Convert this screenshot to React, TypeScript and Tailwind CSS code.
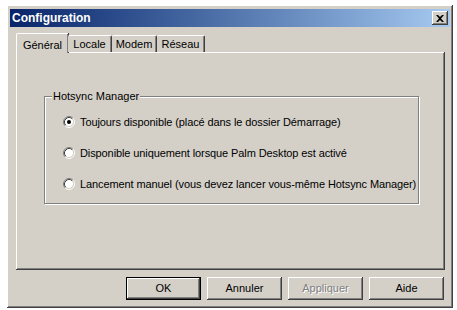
const raised =
  'shadow-[inset_-1px_-1px_#404040,inset_1px_1px_#ffffff,inset_-2px_-2px_#808080,inset_2px_2px_#d4d0c8]';

const Radio = ({ checked }: { checked?: boolean }) => (
  <svg width="12" height="12" viewBox="0 0 12 12" className="shrink-0">
    <circle cx="6" cy="6" r="4.5" fill="#ffffff" />
    <path d="M2.11 9.89 A5.5 5.5 0 0 1 9.89 2.11" fill="none" stroke="#808080" />
    <path d="M9.89 2.11 A5.5 5.5 0 0 1 2.11 9.89" fill="none" stroke="#ffffff" />
    <path d="M2.82 9.18 A4.5 4.5 0 0 1 9.18 2.82" fill="none" stroke="#404040" />
    <path d="M9.18 2.82 A4.5 4.5 0 0 1 2.82 9.18" fill="none" stroke="#d4d0c8" />
    {checked && <circle cx="6" cy="6" r="2" fill="#000000" />}
  </svg>
);

const options = [
  { label: 'Toujours disponible (placé dans le dossier Démarrage)', checked: true },
  { label: 'Disponible uniquement lorsque Palm Desktop est activé' },
  { label: 'Lancement manuel (vous devez lancer vous-même Hotsync Manager)' },
];

const tabs = [
  { label: 'Général', w: 'w-[52px]' },
  { label: 'Locale', w: 'w-[44px]' },
  { label: 'Modem', w: 'w-[45px]' },
  { label: 'Réseau', w: 'w-[48px]' },
];

const Button = ({ label, isDefault, disabled }: { label: string; isDefault?: boolean; disabled?: boolean }) => (
  <div
    className={`w-[75px] h-[23px] flex items-center justify-center bg-[#d4d0c8] ${
      isDefault ? 'border border-black' : ''
    } ${raised}`}
  >
    <span className={disabled ? 'text-[#808080] [text-shadow:1px_1px_0_#ffffff]' : 'text-black'}>{label}</span>
  </div>
);

export default function App() {
  return (
    <div
      className="w-[457px] h-[310px] bg-white pl-[7px] pt-[5px] text-[11px] leading-[13px] text-black"
      style={{ fontFamily: '"Liberation Sans", Arial, sans-serif' }}
    >
      {/* window */}
      <div className={`w-[446px] h-[303px] bg-[#d4d0c8] px-[3px] pt-[4px] flex flex-col ${raised}`}>
        {/* title bar */}
        <div className="h-[18px] flex items-center justify-between bg-gradient-to-r from-[#0a246a] to-[#a6caf0] pl-[2px] pr-[2px]">
          <span className="text-white font-bold text-[12px]">Configuration</span>
          <div className={`w-[16px] h-[14px] bg-[#d4d0c8] flex items-center justify-center ${raised}`}>
            <svg width="8" height="7" viewBox="0 0 8 7">
              <path d="M0 0 L2 0 L4 2 L6 0 L8 0 L5 3.5 L8 7 L6 7 L4 5 L2 7 L0 7 L3 3.5 Z" fill="#000000" />
            </svg>
          </div>
        </div>

        {/* tabs */}
        <div className="mt-[6px] pl-[6px] pr-[5px] flex flex-col">
          <div className="flex items-end h-[19px] relative z-10">
            {tabs.map((t, i) =>
              i === 0 ? (
                <div
                  key={t.label}
                  className={`${t.w} h-[20px] -mb-px bg-[#d4d0c8] border-l border-t border-white rounded-tl-[2px] shadow-[inset_-1px_0_#808080,1px_0_0_#404040] flex items-start justify-center pt-[5px]`}
                >
                  {t.label}
                </div>
              ) : (
                <div
                  key={t.label}
                  className={`${t.w} h-[17px] bg-[#d4d0c8] border-t border-white border-r border-r-[#404040] rounded-tl-[2px] rounded-tr-[2px] shadow-[inset_-1px_0_#808080] flex items-center justify-center pt-[1px]`}
                >
                  {t.label}
                </div>
              )
            )}
          </div>

          {/* panel */}
          <div className={`h-[218px] bg-[#d4d0c8] pl-[28px] pt-[38px] ${raised}`}>
            <fieldset className="w-[375px] h-[114px] border border-[#808080] shadow-[inset_1px_1px_#ffffff,1px_1px_#ffffff] pl-[18px] pr-0 pt-[13px] m-0">
              <legend className="-ml-[11px] px-[1px] bg-[#d4d0c8]">Hotsync Manager</legend>
              <div className="flex flex-col gap-[19px] tracking-[-0.1px] whitespace-nowrap">
                {options.map((o) => (
                  <div key={o.label} className="flex items-center gap-[5px] h-[12px]">
                    <Radio checked={o.checked} />
                    <span>{o.label}</span>
                  </div>
                ))}
              </div>
            </fieldset>
          </div>
        </div>

        {/* buttons */}
        <div className="mt-[7px] pr-[6px] flex justify-end gap-[6px]">
          <Button label="OK" isDefault />
          <Button label="Annuler" />
          <Button label="Appliquer" disabled />
          <Button label="Aide" />
        </div>
      </div>
    </div>
  );
}
